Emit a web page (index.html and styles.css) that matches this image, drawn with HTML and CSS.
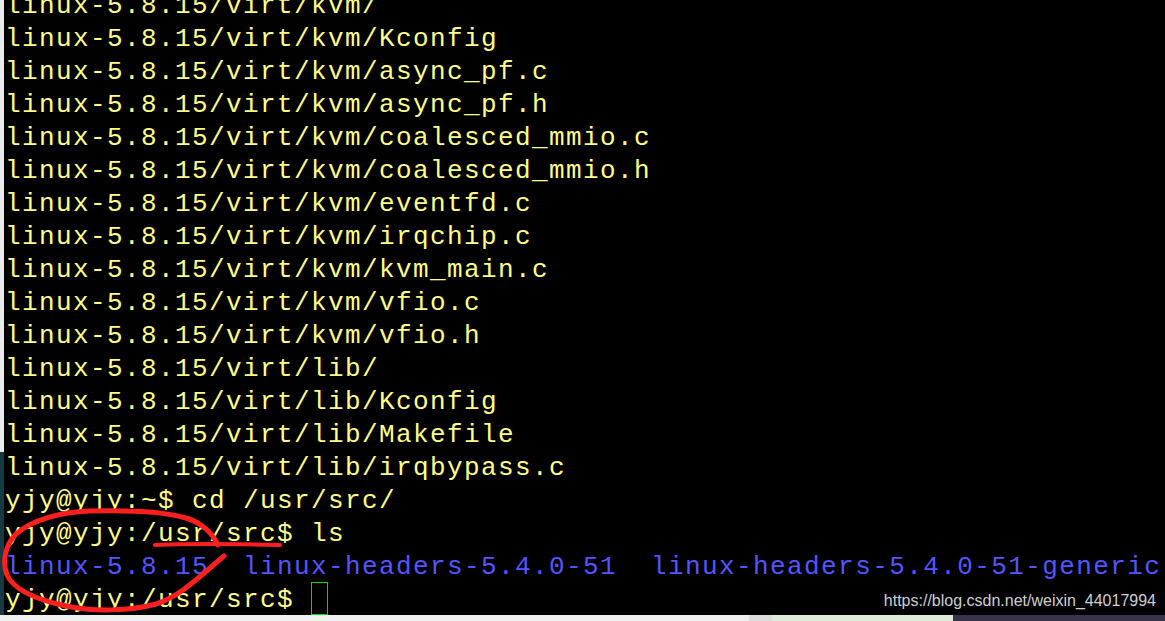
FILE: index.html
```html
<!DOCTYPE html>
<html>
<head>
<meta charset="utf-8">
<link rel="stylesheet" href="styles.css">
</head>
<body>
<div class="screen">
  <div class="main">
    <div class="edge"><div class="edge-top"></div><div class="edge-bottom"></div></div>
    <div class="term">
      <div class="lines">
        <div class="line">linux-5.8.15/virt/kvm/</div>
        <div class="line">linux-5.8.15/virt/kvm/Kconfig</div>
        <div class="line">linux-5.8.15/virt/kvm/async_pf.c</div>
        <div class="line">linux-5.8.15/virt/kvm/async_pf.h</div>
        <div class="line">linux-5.8.15/virt/kvm/coalesced_mmio.c</div>
        <div class="line">linux-5.8.15/virt/kvm/coalesced_mmio.h</div>
        <div class="line">linux-5.8.15/virt/kvm/eventfd.c</div>
        <div class="line">linux-5.8.15/virt/kvm/irqchip.c</div>
        <div class="line">linux-5.8.15/virt/kvm/kvm_main.c</div>
        <div class="line">linux-5.8.15/virt/kvm/vfio.c</div>
        <div class="line">linux-5.8.15/virt/kvm/vfio.h</div>
        <div class="line">linux-5.8.15/virt/lib/</div>
        <div class="line">linux-5.8.15/virt/lib/Kconfig</div>
        <div class="line">linux-5.8.15/virt/lib/Makefile</div>
        <div class="line">linux-5.8.15/virt/lib/irqbypass.c</div>
        <div class="line">yjy@yjy:~$ cd /usr/src/</div>
        <div class="line">yjy@yjy:/usr/src$ ls</div>
        <div class="line dir">linux-5.8.15  linux-headers-5.4.0-51  linux-headers-5.4.0-51-generic</div>
        <div class="line">yjy@yjy:/usr/src$ <span class="cursor"></span></div>
      </div>
      <div class="watermark">https://blog.csdn.net/weixin_44017994</div>
    </div>
  </div>
  <div class="taskbar">
    <div class="seg seg-a"></div>
    <div class="seg seg-b"></div>
    <div class="seg seg-c"></div>
    <div class="seg seg-d"></div>
  </div>
  <svg class="marks" width="1165" height="621" viewBox="0 0 1165 621">
    <path d="M218,545 C212,532 200,522 186,518 C166,512 130,510 90,511 C60,512 32,520 16,534 C5,545 2,562 7,575 C14,590 38,600 66,606 C95,612 130,611 156,604 C181,596 200,576 224,556" fill="none" stroke="#ff1f1f" stroke-width="5" stroke-linecap="round" stroke-linejoin="round"/>
    <path d="M155,545 C200,543 240,544 280,545" fill="none" stroke="#ff1f1f" stroke-width="4" stroke-linecap="round"/>
  </svg>
</div>
</body>
</html>
```

FILE: styles.css
```css
html, body {
  margin: 0;
  padding: 0;
  background: #f0f0f0;
}

.screen {
  position: relative;
  width: 1165px;
  height: 621px;
  overflow: hidden;
  display: flex;
  flex-direction: column;
}

.main {
  display: flex;
  height: 615px;
}

.edge {
  width: 4px;
  display: flex;
  flex-direction: column;
}

.edge-top {
  height: 452px;
  background: #e9ebec;
}

.edge-bottom {
  flex: 1;
  background: #173a42;
}

.term {
  position: relative;
  flex: 1;
  background: #000;
  display: flex;
  flex-direction: column;
  justify-content: flex-end;
  overflow: hidden;
}

.lines {
  padding-left: 1px;
  font-family: "Liberation Mono", monospace;
  font-size: 26px;
  letter-spacing: 1.4px;
  color: #ffff86;
}

.line {
  height: 33px;
  line-height: 36px;
  white-space: pre;
}

.dir {
  color: #5555ff;
}

.cursor {
  display: inline-block;
  box-sizing: border-box;
  width: 17px;
  height: 33px;
  border: 1px solid #00e000;
  vertical-align: top;
}

.watermark {
  position: absolute;
  right: 9px;
  bottom: 5px;
  font-family: "Liberation Sans", Arial, sans-serif;
  font-size: 16px;
  color: #cfcfcf;
  letter-spacing: 0;
}

.taskbar {
  flex: 1;
  display: flex;
}

.seg-a {
  width: 749px;
  background: #f0f0f0;
}

.seg-b {
  width: 23px;
  background: #dcdcdc;
}

.seg-c {
  width: 181px;
  background: #dcecd9;
}

.seg-d {
  flex: 1;
  background: #38334b;
}

.marks {
  position: absolute;
  top: 0;
  left: 0;
  pointer-events: none;
}
```
